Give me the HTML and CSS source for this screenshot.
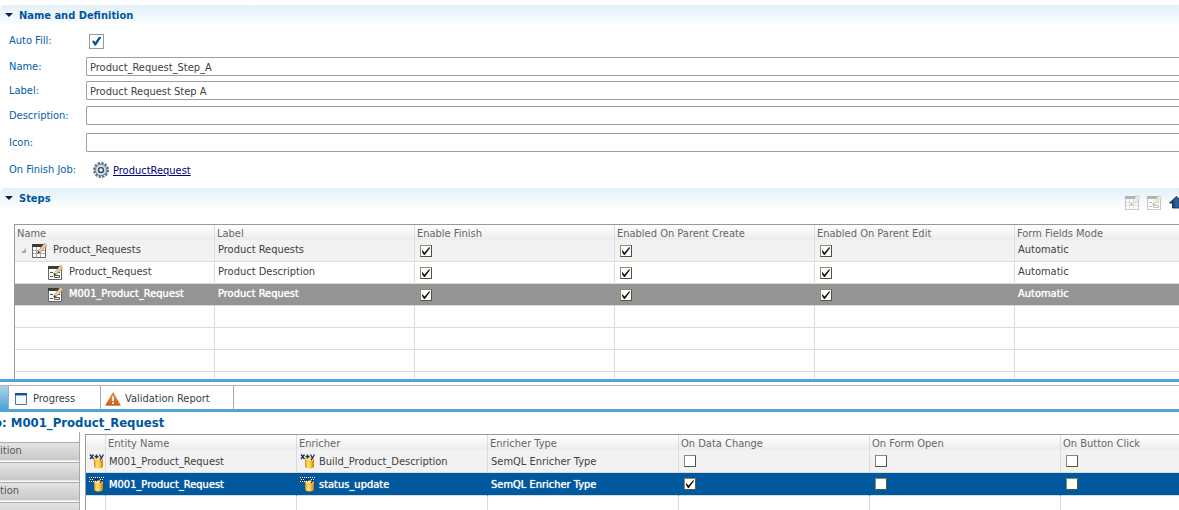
FILE: index.html
```html
<!DOCTYPE html>
<html lang="en">
<head>
<meta charset="utf-8">
<title>Step editor</title>
<link rel="stylesheet" href="styles.css">
</head>
<body>
<svg class="defs" aria-hidden="true">
  <defs>
    <linearGradient id="gold" x1="0" x2="1" y1="0" y2="0"><stop offset="0" stop-color="#d88a10"/><stop offset=".35" stop-color="#ffe682"/><stop offset=".7" stop-color="#f5bd26"/><stop offset="1" stop-color="#c87808"/></linearGradient>
    <linearGradient id="warn" x1="0" x2="0" y1="0" y2="1"><stop offset="0" stop-color="#f0a030"/><stop offset="1" stop-color="#c95a20"/></linearGradient>
    <linearGradient id="arrow" x1="0" x2="1" y1="0" y2="0"><stop offset="0" stop-color="#14284a"/><stop offset=".5" stop-color="#2f62a8"/><stop offset="1" stop-color="#14284a"/></linearGradient>
    <symbol id="pencil" viewBox="0 0 15 15"><path d="M6 8.500 12.500 0 15 2.500 8.500 9.500Z" fill="#e3bd84" stroke="#a07a48" stroke-width=".5"/><path d="M5.500 10.500 6 8 8 9.800Z" fill="#222"/><path d="M7.500 8 13.500 1.500" stroke="#fff0cc" stroke-width=".8"/></symbol>
    <symbol id="grid" viewBox="0 0 15 15"><path d="M.5 1.500H13.500V14.500H.5Z" fill="#fff" stroke="#666"/><path d="M0 1H11V4H0Z" fill="#3c3c3c"/><path d="M1 7.500H13M1 10.500H13M4.500 4V14M8.500 4V14" stroke="#aaa"/><use href="#pencil" width="15" height="15"/></symbol>
    <symbol id="form" viewBox="0 0 15 15"><path d="M.5 1.500H13.500V14.500H.5Z" fill="#fff" stroke="#666"/><path d="M0 1H11V4H0Z" fill="#3c3c3c"/><path d="M2 7.500H5M2 11.500H5" stroke="#555"/><path d="M6.500 10.500H11.500V12.500H6.500ZM9 7.500H12" fill="#fff" stroke="#555"/><use href="#pencil" width="15" height="15"/></symbol>
    <symbol id="cylinder" viewBox="0 0 16 16"><path d="M5 6V13.500C5 16 14 16 14 13.500V6Z" fill="url(#gold)"/><ellipse cx="9.500" cy="6.300" rx="4.200" ry="1.900" fill="#ffe98e" stroke="#e0a020" stroke-width=".6"/></symbol>
    <symbol id="enrich" viewBox="0 0 16 16"><use href="#cylinder" width="16" height="16"/><path d="M1 1.500 4.500 6M4.500 1.500 1 6M5.500 3.500H9.500M7.500 1.500V5.500M10.500 1.500 12.500 5M14.500 1.500 12.300 5.500 11 7" fill="none" stroke="#202c58" stroke-width="1.300"/></symbol>
    <symbol id="enrich-selected" viewBox="0 0 16 16"><use href="#cylinder" width="16" height="16"/><path d="M1 1.500 4.500 6M4.500 1.500 1 6M5.500 3.500H9.500M7.500 1.500V5.500M10.500 1.500 12.500 5M14.500 1.500 12.300 5.500 11 7" fill="none" stroke="#202c58" stroke-width="1.300"/><path d="M0 1.500H5M1 3.500H5M0 5.500H5M6 1.500H10M6 5.500H10M10 1.500H16M11 3.500H15" fill="none" stroke="#fff" stroke-dasharray="1 1"/></symbol>
  </defs>
</svg>

<main class="editor">
  <section class="section definition">
    <header class="section-head"><h2><span class="twisty"></span>Name and Definition</h2></header>
    <form class="fields">
      <div class="field auto"><label for="auto">Auto Fill:</label><input id="auto" class="big-check" type="checkbox" checked></div>
      <div class="field"><label for="name">Name:</label><input id="name" type="text" value="Product_Request_Step_A"></div>
      <div class="field"><label for="label">Label:</label><input id="label" type="text" value="Product Request Step A"></div>
      <div class="field desc"><label for="desc">Description:</label><input id="desc" type="text"></div>
      <div class="field icon-field"><label for="icon">Icon:</label><input id="icon" type="text"></div>
      <div class="field job"><span class="field-name">On Finish Job:</span>
        <svg class="gear" viewBox="0 0 16 16"><circle cx="8" cy="8" r="7" fill="none" stroke="#5f7283" stroke-width="2" stroke-dasharray="2.400 1.265"/><circle cx="8" cy="8" r="5.800" fill="#a9bccb" stroke="#6b8092"/><circle cx="8" cy="8" r="4.200" fill="none" stroke="#d5e2ec" stroke-width="1.400"/><circle cx="8" cy="8" r="2.400" fill="#fff" stroke="#33485b" stroke-width="1.400"/></svg>
        <a href="#job">ProductRequest</a></div>
    </form>
  </section>

  <section class="section steps">
    <header class="section-head">
      <h2><span class="twisty"></span>Steps</h2>
      <div class="tools">
        <button type="button" disabled aria-label="Edit collection"><svg class="tool"><use href="#grid"/></svg></button>
        <button type="button" disabled aria-label="Edit form"><svg class="tool"><use href="#form"/></svg></button>
        <button type="button" aria-label="Move up"><svg class="tool" viewBox="0 0 15 15"><path d="M7.500 1.500 14.500 8H11.500V13H3.500V8H.5Z" fill="url(#arrow)" stroke="#101c38" stroke-width=".8"/></svg></button>
      </div>
    </header>
    <div class="grid-box">
      <table class="grid">
        <colgroup><col class="c200"><col class="c200"><col class="c200"><col class="c200"><col class="c200"><col></colgroup>
        <thead><tr><th>Name</th><th>Label</th><th>Enable Finish</th><th>Enabled On Parent Create</th><th>Enabled On Parent Edit</th><th>Form Fields Mode</th></tr></thead>
        <tbody>
          <tr class="shaded"><td><div class="node"><span class="open"></span><svg class="ico"><use href="#grid"/></svg>Product_Requests</div></td><td>Product Requests</td><td><input type="checkbox" checked aria-label="Enable finish"></td><td><input type="checkbox" checked aria-label="Enabled on parent create"></td><td><input type="checkbox" checked aria-label="Enabled on parent edit"></td><td>Automatic</td></tr>
          <tr><td><div class="node child"><svg class="ico"><use href="#form"/></svg>Product_Request</div></td><td>Product Description</td><td><input type="checkbox" checked aria-label="Enable finish"></td><td><input type="checkbox" checked aria-label="Enabled on parent create"></td><td><input type="checkbox" checked aria-label="Enabled on parent edit"></td><td>Automatic</td></tr>
          <tr class="picked"><td><div class="node child"><svg class="ico"><use href="#form"/></svg>M001_Product_Request</div></td><td>Product Request</td><td><input type="checkbox" checked aria-label="Enable finish"></td><td><input type="checkbox" checked aria-label="Enabled on parent create"></td><td><input type="checkbox" checked aria-label="Enabled on parent edit"></td><td>Automatic</td></tr>
          <tr><td></td><td></td><td></td><td></td><td></td><td></td></tr>
          <tr><td></td><td></td><td></td><td></td><td></td><td></td></tr>
          <tr><td></td><td></td><td></td><td></td><td></td><td></td></tr>
          <tr class="partial"><td></td><td></td><td></td><td></td><td></td><td></td></tr>
        </tbody>
      </table>
    </div>
  </section>
</main>

<section class="views">
  <nav class="tabs">
    <span class="active-tab"></span>
    <button type="button" class="tab progress"><svg class="tab-ico" viewBox="0 0 14 14"><path d="M1.500 1.500H12.500V12.500H1.500Z" fill="#f2f9ff" stroke="#5577a5"/><path d="M1 1H13V3H1Z" fill="#244f86"/><path d="M2 3.500H12" stroke="#84b8e8"/></svg>Progress</button>
    <button type="button" class="tab report"><svg class="tab-ico warn" viewBox="0 0 16 14"><path d="M8 .8 15.300 13.300H.7Z" fill="url(#warn)" stroke="#c46a28" stroke-width=".8" stroke-linejoin="round"/><path d="M8 4.500V9M8 10.300V12" stroke="#fff" stroke-width="1.800"/></svg>Validation Report</button>
  </nav>
  <h1><span>o: M001_Product_Request</span></h1>
  <div class="panel">
    <nav class="pages">
      <button type="button">ition</button>
      <button type="button" aria-label="Page"></button>
      <button type="button">tion</button>
      <button type="button" aria-label="Page"></button>
    </nav>
    <div class="grid-box enrichers">
      <table class="grid">
        <colgroup><col class="c20"><col class="c191"><col class="c191"><col class="c191"><col class="c191"><col class="c191"><col></colgroup>
        <thead><tr><th></th><th>Entity Name</th><th>Enricher</th><th>Enricher Type</th><th>On Data Change</th><th>On Form Open</th><th>On Button Click</th></tr></thead>
        <tbody>
          <tr class="shaded"><td><svg class="en"><use href="#enrich"/></svg></td><td>M001_Product_Request</td><td><div class="node"><svg class="en"><use href="#enrich"/></svg>Build_Product_Description</div></td><td>SemQL Enricher Type</td><td><input type="checkbox" aria-label="On data change"></td><td><input type="checkbox" aria-label="On form open"></td><td><input type="checkbox" aria-label="On button click"></td></tr>
          <tr class="active"><td><svg class="en"><use href="#enrich-selected"/></svg></td><td>M001_Product_Request</td><td><div class="node"><svg class="en"><use href="#enrich-selected"/></svg>status_update</div></td><td>SemQL Enricher Type</td><td><input type="checkbox" checked aria-label="On data change"></td><td><input type="checkbox" aria-label="On form open"></td><td><input type="checkbox" aria-label="On button click"></td></tr>
          <tr class="partial"><td></td><td></td><td></td><td></td><td></td><td></td><td></td></tr>
        </tbody>
      </table>
    </div>
  </div>
</section>
</body>
</html>
```
FILE: styles.css
```css
* { box-sizing: border-box; }
body { margin: 0; background: #fff; color: #404040; font: 11px/14px "DejaVu Sans Condensed", "Noto Sans", sans-serif; overflow: hidden; }
button, input { font: inherit; color: inherit; }
button { border: 0; padding: 0; background: none; }
h1, h2 { margin: 0; }
svg { display: block; flex: none; }
.defs { position: absolute; width: 0; height: 0; }

.definition { padding-top: 5px; }
.section-head { display: flex; height: 22px; border-top-left-radius: 5px; background: linear-gradient(#e3f1f8, #fff); }
.section-head h2 { display: flex; gap: 6px; padding: 4px 5px; font-size: 11px; line-height: 14px; color: #00559f; }
.twisty { width: 8px; height: 4px; margin-top: 4px; background: #002060; clip-path: polygon(0 0, 100% 0, 50% 100%); }

.fields { padding-left: 9px; }
.field { display: flex; align-items: center; height: 19px; margin-bottom: 5px; color: #0060a8; }
.field label, .field-name { flex: none; width: 77px; }
.field input[type="text"] { flex: 1; min-width: 0; height: 19px; padding: 2px 3px 0; border: 1px solid #a0a0a0; border-right: 0; border-radius: 2px 0 0 2px; color: #404040; background: #fff; }
.auto { height: 28px; margin-bottom: 2px; }
.auto .big-check { margin: 0 3px; }
.desc { margin: 6px 0 8px; }
.icon-field { margin-bottom: 9px; }
.job { height: 18px; margin-bottom: 9px; }
.gear { width: 16px; height: 16px; margin: 0 4px 0 7px; }
.job a { padding-top: 2px; color: #000080; }

input[type="checkbox"] { appearance: none; display: grid; place-items: center; width: 12px; height: 12px; margin: 0; border: 1px solid #8c8c6c; border-right-color: #55553c; border-bottom-color: #55553c; background: #fff; }
input[type="checkbox"]:checked::before { content: ""; width: 8px; height: 8px; background: #111; clip-path: polygon(0 38%, 32% 68%, 92% 0, 100% 14%, 36% 100%, 24% 100%, 0 64%); }
input.big-check { width: 15px; height: 15px; border: 1px solid #999; }
input.big-check:checked::before { width: 9px; height: 9px; background: #00509c; clip-path: polygon(0 50%, 20% 45%, 36% 64%, 80% 0, 100% 0, 100% 14%, 44% 100%, 28% 100%); }

.steps .section-head { height: 36px; background: linear-gradient(#e3f1f8, #fff 22px); justify-content: space-between; }
.tools { display: flex; gap: 7px; margin-right: -5px; padding-top: 6px; height: 22px; }
.tool { width: 15px; height: 15px; }
button:disabled .tool { opacity: .35; }

.grid-box { margin-left: 14px; border: solid #999; border-width: 1px 0 0 1px; }
.grid { width: 100%; table-layout: fixed; border-collapse: separate; border-spacing: 0; }
.c200 { width: 200px; }
.c191 { width: 191px; }
.c20 { width: 20px; }
.grid th { height: 15px; padding: 2px 2px 0; text-align: left; font-weight: 400; line-height: 13px; color: #666; background: linear-gradient(#fff, #ececec); border-right: 1px solid #dcdcdc; white-space: nowrap; }
.grid td { height: 22px; padding: 3px 3px 0; vertical-align: top; border: solid #dcdcdc; border-width: 0 1px 1px 0; white-space: nowrap; }
.grid td input { margin: 2px 0 0 2px; }
.grid .shaded td { background: #f2f2f2; }
.grid .partial td { height: 7px; padding: 0; border-bottom: 0; }
.grid .picked td { color: #fff; background: #949494; text-shadow: 0 0 1px #fff; border-right-color: #949494; }
.grid th:last-child, .grid td:last-child { border-right: 0; }
.node { display: flex; height: 14px; }
.open { width: 5px; height: 5px; margin: 5px 6px 0 3px; background: #aaa; clip-path: polygon(100% 0, 100% 100%, 0 100%); }
.ico { width: 15px; height: 15px; margin-right: 6px; }
.child { padding-left: 30px; }

.views { border-top: 3px solid #4fa5d3; padding-top: 3px; }
.tabs { display: flex; height: 27px; border-top: 1px solid #b4b4b4; border-bottom: 3px solid #4fa5d3; }
.active-tab { width: 9px; border-right: 1px solid #aaa; background: linear-gradient(#a9d3e8, #4fa5d3); }
.tab { display: flex; align-items: center; gap: 5px; padding: 2px 5px 0; border-right: 1px solid #aaa; }
.progress { width: 92px; }
.report { width: 133px; gap: 4px; padding-left: 4px; }
.tab-ico { width: 14px; height: 14px; }
.tab-ico.warn { width: 16px; }
h1 { display: flex; height: 22px; overflow: hidden; font-size: 13px; line-height: 22px; color: #00559f; }
h1 span { margin-left: -6px; }
.panel { display: flex; }
.pages { width: 80px; margin-top: -2px; padding-top: 10px; border-right: 1px solid #aaa; margin-right: 5px; }
.pages button { display: block; width: 100%; height: 20px; padding-bottom: 3px; text-align: left; color: #555; border-top: 1px solid #aaa; background: linear-gradient(#e4e4e4, #c8c8c8 17px, #fff 18px); }
.enrichers { flex: 1; min-width: 0; margin: 0; }
.enrichers td { height: 23px; padding-top: 5px; }
.enrichers td:first-child { padding: 3px 3px 0; }
.enrichers .node { height: 16px; margin-top: -2px; line-height: 18px; }
.enrichers td input { margin-top: 0; }
.grid .active td { color: #fff; background: #00589f; text-shadow: 0 0 1px #fff; border-right-color: #00589f; }
.en { width: 16px; height: 16px; }
.enrichers .node .en { margin: 0 3px 0 0; }
.enrichers .partial td { height: 15px; }
```
